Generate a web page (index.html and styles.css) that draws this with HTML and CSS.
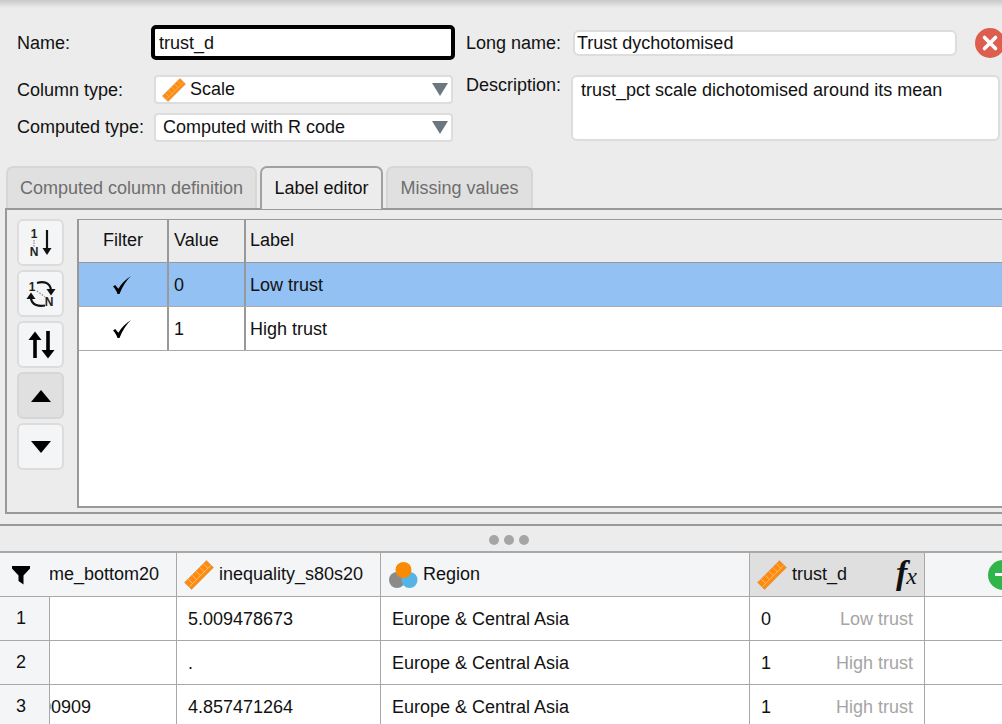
FILE: index.html
```html
<!DOCTYPE html>
<html lang="en">

<head>
  <meta charset="UTF-8">
  <meta name="viewport" content="width=device-width, initial-scale=1.0">
  <title>Label editor</title>
  <link rel="stylesheet" href="styles.css">
</head>

<body>
  <svg class="defs" width="0" height="0" aria-hidden="true">
    <symbol id="ruler" viewBox="0 0 30 30">
      <g transform="rotate(-45 15 15)">
        <rect x="-.5" y="10" width="31" height="10" fill="#ff8a0c" stroke="#c9a27c" stroke-width=".7"/>
        <path d="M4.500 10.500v6M10 10.500v6M15.500 10.500v6M21 10.500v6M26 10.500v6M0 16.500h30" stroke="#ffc78c" stroke-width=".8" fill="none"/>
      </g>
    </symbol>
    <symbol id="tick" viewBox="0 0 20 20">
      <path d="M1 11.500l2.200-1.600 3.200 3.800C9.500 8.500 13.500 4.500 19 1c-4.500 4.500-8.500 10-11.500 18H5.500C4.500 16 3 13.500 1 11.500z" fill="#000"/>
    </symbol>
  </svg>

  <header class="column-form">
    <div class="form-left">
      <div class="form-row name-row">
        <label class="form-label">Name:</label>
        <input class="name-input" value="trust_d">
      </div>
      <div class="form-row type-row">
        <label class="form-label">Column type:</label>
        <div class="select">
          <svg class="select-icon" width="24" height="24"><use href="#ruler"/></svg>
          <span>Scale</span>
          <i class="select-arrow"></i>
        </div>
      </div>
      <div class="form-row computed-row">
        <label class="form-label">Computed type:</label>
        <div class="select">
          <span>Computed with R code</span>
          <i class="select-arrow"></i>
        </div>
      </div>
    </div>
    <div class="form-right">
      <div class="long-row">
        <label class="form-label long-label">Long name:</label>
        <input class="long-input" value="Trust dychotomised">
        <span class="close-btn">
          <svg width="30" height="30" viewBox="0 0 30 30"><circle cx="15" cy="15" r="15" fill="#dd5e4e"/><path d="M9.500 9.500l11 11M20.500 9.500l-11 11" stroke="#fff" stroke-width="3.600" stroke-linecap="round"/></svg>
        </span>
      </div>
      <div class="desc-row">
        <label class="form-label desc-label">Description:</label>
        <div class="desc-box">trust_pct scale dichotomised around its mean</div>
      </div>
    </div>
  </header>

  <nav class="tabs">
    <span class="tab tab-first">Computed column definition</span>
    <span class="tab tab-active">Label editor</span>
    <span class="tab tab-last">Missing values</span>
  </nav>

  <section class="tab-panel">
    <div class="side-btns">
      <button class="side-btn">
        <svg width="30" height="36" viewBox="0 0 30 36">
          <text x="8" y="13" class="mini">1</text><text x="8" y="31" class="mini">N</text>
          <path d="M8 15v7" stroke="#777" stroke-width="1" stroke-dasharray="1.500 1"/>
          <path d="M21 5v19" stroke="#111" stroke-width="2.200"/><path d="M16.500 23h9L21 30z" fill="#111"/>
        </svg>
      </button>
      <button class="side-btn">
        <svg width="34" height="36" viewBox="0 0 34 36">
          <text x="8" y="14.500" class="mini">1</text><text x="25" y="30" class="mini">N</text>
          <path d="M13 7c6-2 13-1 14 7" fill="none" stroke="#111" stroke-width="2.200"/><path d="M22.500 13h9L27 19.500z" fill="#111"/>
          <path d="M21 29.500c-6 1-13 0-14-7" fill="none" stroke="#111" stroke-width="2.200"/><path d="M2.500 23h9L7 16.500z" fill="#111"/>
          <path d="M13 15l8 6" stroke="#888" stroke-width="1.200" stroke-dasharray="1.500 1.500"/>
        </svg>
      </button>
      <button class="side-btn">
        <svg width="30" height="36" viewBox="0 0 30 36">
          <path d="M9 10v21" stroke="#000" stroke-width="3.600"/><path d="M2.500 13L9 4.500l6.500 8.500z" fill="#000"/>
          <path d="M22 4v21" stroke="#000" stroke-width="3.600"/><path d="M15.500 23L22 31.500l6.500-8.500z" fill="#000"/>
        </svg>
      </button>
      <button class="side-btn side-btn-pressed"><i class="tri-up"></i></button>
      <button class="side-btn"><i class="tri-down"></i></button>
    </div>

    <div class="label-table">
      <div class="lt-row lt-head">
        <div class="lt-cell lt-filter">Filter</div>
        <div class="lt-cell">Value</div>
        <div class="lt-cell lt-label">Label</div>
      </div>
      <div class="lt-row lt-selected">
        <div class="lt-cell lt-filter"><svg width="20" height="20"><use href="#tick"/></svg></div>
        <div class="lt-cell">0</div>
        <div class="lt-cell lt-label">Low trust</div>
      </div>
      <div class="lt-row">
        <div class="lt-cell lt-filter"><svg width="20" height="20"><use href="#tick"/></svg></div>
        <div class="lt-cell">1</div>
        <div class="lt-cell lt-label">High trust</div>
      </div>
    </div>
  </section>

  <div class="splitter">
    <i class="dot"></i><i class="dot"></i><i class="dot"></i>
  </div>

  <div class="data-grid">
    <div class="dg-head dg-corner">
      <svg width="20" height="20" viewBox="0 0 20 20"><path d="M1 1h18v2.500l-6.500 7v9l-5-3.500v-5.500L1 3.500z" fill="#000"/></svg>
    </div>
    <div class="dg-head dg-clip">me_bottom20</div>
    <div class="dg-head dg-col">
      <svg width="30" height="30"><use href="#ruler"/></svg>
      <span>inequality_s80s20</span>
    </div>
    <div class="dg-head dg-col">
      <svg width="30" height="30" viewBox="0 0 30 30">
        <circle cx="9" cy="20" r="8" fill="#8a8a8a"/>
        <circle cx="21.500" cy="20" r="8" fill="#55b4e3"/>
        <circle cx="15.500" cy="10" r="8" fill="#f98b04"/>
      </svg>
      <span>Region</span>
    </div>
    <div class="dg-head dg-col dg-computed">
      <svg width="30" height="30"><use href="#ruler"/></svg>
      <span>trust_d</span>
      <em class="fx">f<small>x</small></em>
    </div>
    <div class="dg-head dg-add">
      <span class="add-btn"><b></b></span>
    </div>

    <div class="dg-num">1</div>
    <div class="dg-cell dg-cell-clip"></div>
    <div class="dg-cell">5.009478673</div>
    <div class="dg-cell">Europe &amp; Central Asia</div>
    <div class="dg-cell dg-pair"><span>0</span><span class="dg-muted">Low trust</span></div>
    <div class="dg-cell"></div>

    <div class="dg-num">2</div>
    <div class="dg-cell dg-cell-clip"></div>
    <div class="dg-cell">.</div>
    <div class="dg-cell">Europe &amp; Central Asia</div>
    <div class="dg-cell dg-pair"><span>1</span><span class="dg-muted">High trust</span></div>
    <div class="dg-cell"></div>

    <div class="dg-num">3</div>
    <div class="dg-cell dg-cell-clip">00909</div>
    <div class="dg-cell">4.857471264</div>
    <div class="dg-cell">Europe &amp; Central Asia</div>
    <div class="dg-cell dg-pair"><span>1</span><span class="dg-muted">High trust</span></div>
    <div class="dg-cell"></div>
  </div>
</body>

</html>
```
FILE: styles.css
```css
* {
  box-sizing: border-box;
}

html,
body {
  height: 724px;
  overflow: hidden;
}

body {
  margin: 0;
  width: 1002px;
  background: #ececec;
  color: #111;
  font-family: "Liberation Sans", Arial, sans-serif;
  font-size: 18px;
}

.defs {
  display: block;
  height: 0;
}

/* top form */
.column-form {
  display: flex;
  height: 166px;
  padding-top: 25px;
  background: linear-gradient(#c8c8c8, #ececec 8px);
}

.form-left {
  width: 466px;
  padding-left: 17px;
  flex: none;
}

.form-row {
  display: flex;
  align-items: center;
  padding-top: 1px;
}

.name-row {
  height: 35px;
}

.type-row {
  margin-top: 15px;
  height: 29px;
}

.computed-row {
  margin-top: 9px;
  height: 29px;
  padding-top: 0;
}

.form-label {
  width: 137px;
  flex: none;
}

.name-input {
  width: 304px;
  height: 35px;
  margin-left: -3px;
  margin-top: -1px;
  padding: 1px 4px 0;
  border: 4px solid #000;
  border-radius: 5px;
  background: #fff;
  color: #111;
  font: inherit;
}

.select {
  width: 299px;
  height: 100%;
  display: flex;
  align-items: center;
  gap: 4px;
  padding: 0 7px;
  border: 2px solid #ddd;
  border-radius: 4px;
  background: #fff;
}

.type-row .select {
  margin-top: -1px;
  height: 29px;
}

.select-icon {
  margin-left: -1px;
}

.select-arrow {
  margin-left: auto;
  margin-right: -4px;
  border-style: solid;
  border-width: 13px 8px 0;
  border-color: #6d7780 transparent transparent;
}

.form-right {
  flex: 1;
  min-width: 0;
}

.long-row {
  display: flex;
  align-items: center;
  height: 35px;
}

.long-label {
  width: 107px;
  padding-top: 1px;
}

.long-input {
  width: 384px;
  height: 26px;
  flex: none;
  padding: 1px 2px 0;
  border: 2px solid #ddd;
  border-radius: 6px;
  background: #fff;
  color: #111;
  font: inherit;
}

.close-btn {
  display: flex;
  margin-left: 18px;
  flex: none;
}

.desc-row {
  display: flex;
  margin-top: 15px;
}

.desc-label {
  width: 105px;
  padding-top: 0;
}

.desc-box {
  width: 429px;
  height: 66px;
  padding: 3px 8px;
  border: 2px solid #ddd;
  border-radius: 6px;
  background: #fff;
}

/* tabs */
.tabs {
  display: flex;
  height: 42px;
  gap: 3px;
  padding-left: 6px;
}

.tab {
  display: flex;
  align-items: center;
  justify-content: center;
  border: 2px solid #d6d6d6;
  border-bottom: 0;
  border-radius: 7px 7px 0 0;
  background: #e0e0e0;
  color: #6e6e6e;
}

.tab-first {
  width: 251px;
}

.tab-active {
  width: 123px;
  height: 43px;
  border-color: #a0a0a0;
  background: #ececec;
  color: #111;
  position: relative;
  z-index: 1;
}

.tab-last {
  width: 147px;
}

.tab-panel {
  display: flex;
  height: 306px;
  margin-left: 5px;
  border: solid #999;
  border-width: 2px 0 2px 2px;
}

.side-btns {
  width: 70px;
  flex: none;
  display: flex;
  flex-direction: column;
  gap: 4px;
  padding: 9px 0 0 10px;
}

.side-btn {
  width: 47px;
  height: 47px;
  flex: none;
  padding: 0;
  display: flex;
  align-items: center;
  justify-content: center;
  border: 2px solid #dcdcdc;
  border-radius: 6px;
  background: #f4f5f7;
}

.side-btn-pressed {
  background: #e0e0e0;
  border-color: #d6d6d6;
}

.mini {
  font-family: "Liberation Sans", Arial, sans-serif;
  font-size: 12px;
  font-weight: 700;
  text-anchor: middle;
  fill: #222;
}

.tri-up,
.tri-down {
  border-style: solid;
  border-color: transparent;
}

.tri-up {
  border-width: 0 10px 12px;
  border-bottom-color: #000;
}

.tri-down {
  border-width: 12px 10px 0;
  border-top-color: #000;
}

/* label table */
.label-table {
  flex: 1;
  height: 289px;
  margin-top: 9px;
  border: solid #999;
  border-width: 1px 0 2px 2px;
  background: #fff;
}

.lt-row {
  display: grid;
  grid-template-columns: 90px 77px 1fr;
  height: 44px;
  border-bottom: 1px solid #aaa;
}

.lt-head {
  height: 43px;
  background: #ececec;
  border-bottom-color: #999;
}

.lt-selected {
  background: #94c1f3;
}

.lt-cell {
  display: flex;
  align-items: center;
  padding-top: 2px;
  padding-left: 5px;
  border-right: 2px solid #999;
}

.lt-head .lt-cell {
  padding-top: 0;
  padding-bottom: 2px;
}

.lt-filter {
  justify-content: center;
  padding-left: 0;
}

.lt-filter svg {
  margin-left: -2px;
  margin-top: -1px;
}

.lt-label {
  border-right: 0;
  padding-left: 4px;
}

/* splitter */
.splitter {
  display: flex;
  justify-content: center;
  align-items: center;
  gap: 5px;
  height: 29px;
  margin-top: 10px;
  border-top: 2px solid #999;
  border-bottom: 2px solid #a8a8a8;
  padding: 3px 0 0 16px;
}

.dot {
  width: 10px;
  height: 10px;
  border-radius: 50%;
  background: #a5a5a5;
}

/* data grid */
.data-grid {
  display: grid;
  grid-template-columns: 50px 127px 204px 369px 175px 77px;
  grid-auto-rows: 44px;
  width: 1002px;
  background: #fff;
}

.dg-head {
  display: flex;
  align-items: center;
  background: #f4f5f7;
  border-right: 1px solid #a8a8a8;
  border-bottom: 1px solid #a8a8a8;
}

.dg-corner {
  justify-content: flex-start;
  border-right: 0;
  padding-left: 11px;
}

.dg-clip {
  justify-content: flex-end;
  padding-right: 17px;
  overflow: hidden;
}

.dg-col {
  gap: 5px;
  padding-left: 7px;
}

.dg-computed {
  background: #dfdfdf;
  padding-right: 7px;
}

.fx {
  margin-left: auto;
  font-family: "Liberation Serif", serif;
  font-size: 34px;
  line-height: 30px;
  font-weight: 700;
  color: #111;
}

.fx small {
  margin-left: -1px;
  font-size: 24px;
  font-weight: 400;
}

.dg-add {
  border-right: 0;
  overflow: hidden;
  padding-left: 63px;
}

.add-btn {
  display: flex;
  align-items: center;
  justify-content: center;
  width: 30px;
  height: 30px;
  flex: none;
  border-radius: 50%;
  background: #30b54a;
}

.add-btn b {
  width: 16px;
  height: 3px;
  background: #fff;
}

.dg-num {
  display: flex;
  align-items: center;
  padding-left: 16px;
  padding-bottom: 1px;
  background: #f4f5f7;
  border-right: 1px solid #a8a8a8;
  border-bottom: 1px solid #a8a8a8;
}

.dg-cell {
  display: flex;
  align-items: center;
  padding: 2px 10px 0 11px;
  border-right: 1px solid #a8a8a8;
  border-bottom: 1px solid #a8a8a8;
  white-space: nowrap;
  overflow: hidden;
}

.dg-cell:nth-child(6n) {
  border-right: 0;
}

.dg-cell-clip {
  justify-content: flex-end;
  padding-right: 85px;
}

.dg-pair {
  justify-content: space-between;
  padding-right: 11px;
}

.dg-muted {
  color: #a5a5a5;
}
```
